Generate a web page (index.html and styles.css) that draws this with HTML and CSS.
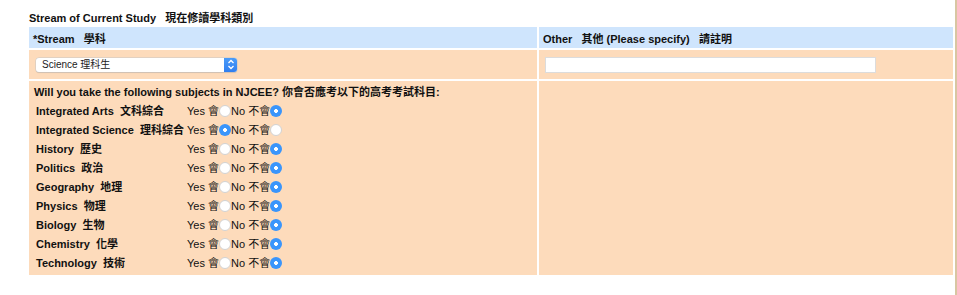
FILE: index.html
```html
<!DOCTYPE html>
<html lang="zh-Hant">
<head>
    <meta charset="UTF-8">
    <title>Stream of Current Study</title>
    <link rel="stylesheet" href="styles.css">
</head>
<body>
    <div class="page">
        <div class="content">
            <div class="section-title">Stream of Current Study&nbsp;&nbsp; 現在修讀學科類別</div>

            <table class="form-table">
                <colgroup>
                    <col class="col-main">
                    <col>
                </colgroup>
                <tr class="head">
                    <td>*Stream&nbsp;&nbsp; 學科</td>
                    <td>Other&nbsp;&nbsp; 其他 (Please specify)&nbsp;&nbsp; 請註明</td>
                </tr>
                <tr class="fields">
                    <td>
                        <div class="select-wrap">
                            <select class="stream-select">
                                <option>Science 理科生</option>
                                <option>Arts 文科生</option>
                            </select>
                            <span class="select-arrow">
                                <svg width="8" height="11" viewBox="0 0 8 11">
                                    <path d="M1.5 4 L4 1.5 L6.5 4 M1.5 7 L4 9.5 L6.5 7" fill="none" stroke="#fff" stroke-width="1.3"/>
                                </svg>
                            </span>
                        </div>
                    </td>
                    <td><input type="text" class="other-input"></td>
                </tr>
                <tr class="subjects-row">
                    <td>
                        <div class="question">Will you take the following subjects in NJCEE? 你會否應考以下的高考考試科目:</div>
                        <table class="subjects">
                            <tr>
                                <td class="subject">Integrated Arts&nbsp; 文科綜合</td>
                                <td>Yes 會<input type="radio" name="s1">No 不會<input type="radio" name="s1" checked></td>
                            </tr>
                            <tr>
                                <td class="subject">Integrated Science&nbsp; 理科綜合</td>
                                <td>Yes 會<input type="radio" name="s2" checked>No 不會<input type="radio" name="s2"></td>
                            </tr>
                            <tr>
                                <td class="subject">History&nbsp; 歷史</td>
                                <td>Yes 會<input type="radio" name="s3">No 不會<input type="radio" name="s3" checked></td>
                            </tr>
                            <tr>
                                <td class="subject">Politics&nbsp; 政治</td>
                                <td>Yes 會<input type="radio" name="s4">No 不會<input type="radio" name="s4" checked></td>
                            </tr>
                            <tr>
                                <td class="subject">Geography&nbsp; 地理</td>
                                <td>Yes 會<input type="radio" name="s5">No 不會<input type="radio" name="s5" checked></td>
                            </tr>
                            <tr>
                                <td class="subject">Physics&nbsp; 物理</td>
                                <td>Yes 會<input type="radio" name="s6">No 不會<input type="radio" name="s6" checked></td>
                            </tr>
                            <tr>
                                <td class="subject">Biology&nbsp; 生物</td>
                                <td>Yes 會<input type="radio" name="s7">No 不會<input type="radio" name="s7" checked></td>
                            </tr>
                            <tr>
                                <td class="subject">Chemistry&nbsp; 化學</td>
                                <td>Yes 會<input type="radio" name="s8">No 不會<input type="radio" name="s8" checked></td>
                            </tr>
                            <tr>
                                <td class="subject">Technology&nbsp; 技術</td>
                                <td>Yes 會<input type="radio" name="s9">No 不會<input type="radio" name="s9" checked></td>
                            </tr>
                        </table>
                    </td>
                    <td></td>
                </tr>
            </table>
        </div>
        <div class="edge"></div>
    </div>
</body>
</html>
```

FILE: styles.css
```css
body {
    margin: 0;
    font-family: "Liberation Sans", "Noto Sans CJK TC", sans-serif;
    font-size: 11px;
    color: #111;
    background: #fff;
}

.page {
    display: flex;
    height: 295px;
}

.content {
    flex: 1;
}

.edge {
    width: 3px;
    background: #d8c6a2;
}

.section-title {
    font-weight: bold;
    line-height: 13px;
    padding: 12px 0 0 29px;
}

.form-table {
    margin-left: 27px;
    width: 928px;
    table-layout: fixed;
    border-collapse: separate;
    border-spacing: 2px;
}

.col-main {
    width: 508px;
}

.form-table > tbody > tr > td {
    padding: 0;
    background: #fddbbb;
}

.head td {
    background: #cfe5fd !important;
    height: 21px;
    font-weight: bold;
    padding-left: 4px !important;
    vertical-align: middle;
}

.fields td {
    height: 29px;
    vertical-align: middle;
}

.select-wrap {
    position: relative;
    width: 201px;
    height: 14px;
    margin-left: 7px;
}

.stream-select {
    -webkit-appearance: none;
    appearance: none;
    display: block;
    width: 201px;
    height: 14px;
    margin: 0;
    padding: 0 0 0 6px;
    border: none;
    border-radius: 3px;
    background: #fff;
    box-shadow: 0 0 0 0.5px #c8c8c8, 0 1px 1px rgba(0, 0, 0, 0.15);
    font-family: "Liberation Sans", "Noto Sans CJK TC", sans-serif;
    font-size: 10px;
    line-height: 14px;
    color: #222;
}

.select-arrow {
    position: absolute;
    top: 0;
    right: 0;
    width: 13px;
    height: 14px;
    border-radius: 0 3px 3px 0;
    background: linear-gradient(#4a9bf8, #2f7ef0);
    display: flex;
    align-items: center;
    justify-content: center;
}

.other-input {
    display: block;
    margin: 0 0 0 6px;
    width: 331px;
    height: 16px;
    box-sizing: border-box;
    border: 1px solid #dcdcdc;
    background: #fff;
    padding: 0 3px;
    font-size: 11px;
}

.subjects-row td {
    height: 194px;
    vertical-align: top;
}

.question {
    font-weight: bold;
    line-height: 15px;
    padding: 4px 0 0 5px;
}

.subjects {
    border-collapse: collapse;
    margin-left: 5px;
}

.subjects td {
    height: 19px;
    padding: 0 0 0 2px;
    background: none;
    white-space: nowrap;
    vertical-align: middle;
}

.subjects .subject {
    width: 149px;
    font-weight: bold;
}

.subjects input[type="radio"] {
    -webkit-appearance: none;
    appearance: none;
    width: 12px;
    height: 12px;
    margin: 0;
    vertical-align: -2px;
    border-radius: 50%;
    border: 1px solid #d2d2d2;
    background: #fff;
    box-sizing: border-box;
}

.subjects input[type="radio"]:checked {
    border: none;
    background: radial-gradient(circle, #fff 0 1.6px, #3a95fb 2.2px);
}
```
